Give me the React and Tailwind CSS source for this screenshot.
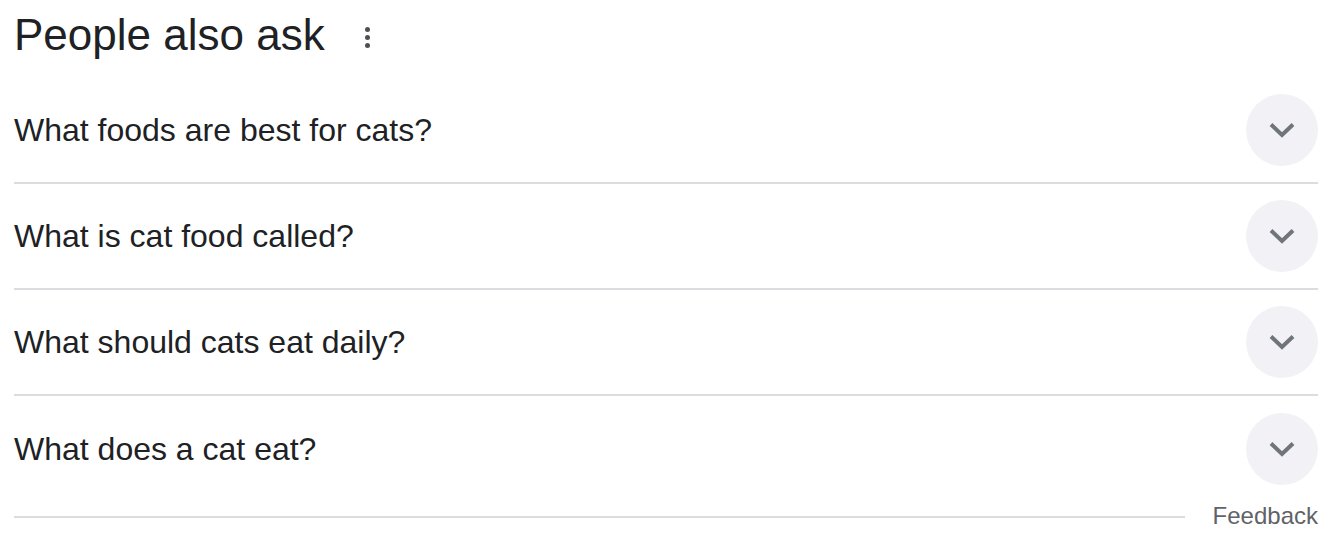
const questions = [
  "What foods are best for cats?",
  "What is cat food called?",
  "What should cats eat daily?",
  "What does a cat eat?",
];

function Chevron() {
  return (
    <svg width="26" height="16" viewBox="0 0 26 16" fill="none">
      <path d="M2 2.5 L13 13 L24 2.5" stroke="#70757a" strokeWidth="4" />
    </svg>
  );
}

export default function App() {
  return (
    <div className="w-[1340px] h-[550px] bg-white pl-[14px] pr-[22px] font-['Liberation_Sans',Arial,sans-serif] text-[#202124]">
      {/* HEADING */}
      <div className="h-[78px] pt-[9px] flex items-start">
        <h2 className="text-[44px] leading-[52px]">People also ask</h2>
        <div className="ml-[40px] mt-[18px] flex flex-col gap-[3px]">
          <span className="w-[5px] h-[5px] rounded-full bg-[#4d5156]"></span>
          <span className="w-[5px] h-[5px] rounded-full bg-[#4d5156]"></span>
          <span className="w-[5px] h-[5px] rounded-full bg-[#4d5156]"></span>
        </div>
      </div>

      {/* QUESTIONS */}
      {questions.map((q, i) => (
        <div
          key={i}
          className={
            i < questions.length - 1
              ? "h-[106px] flex items-center justify-between border-b-2 border-[#dadce0]"
              : "h-[106px] flex items-center justify-between"
          }
        >
          <span className="text-[32px] leading-[40px]">{q}</span>
          <div className="w-[72px] h-[72px] rounded-full bg-[#f2f1f5] flex items-center justify-center">
            <Chevron />
          </div>
        </div>
      ))}

      {/* FEEDBACK */}
      <div className="h-[30px] flex items-center">
        <div className="flex-1 h-[2px] bg-[#dadce0]"></div>
        <span className="ml-[28px] text-[24px] leading-[30px] text-[#5f6368] pb-[2px]">Feedback</span>
      </div>
    </div>
  );
}
